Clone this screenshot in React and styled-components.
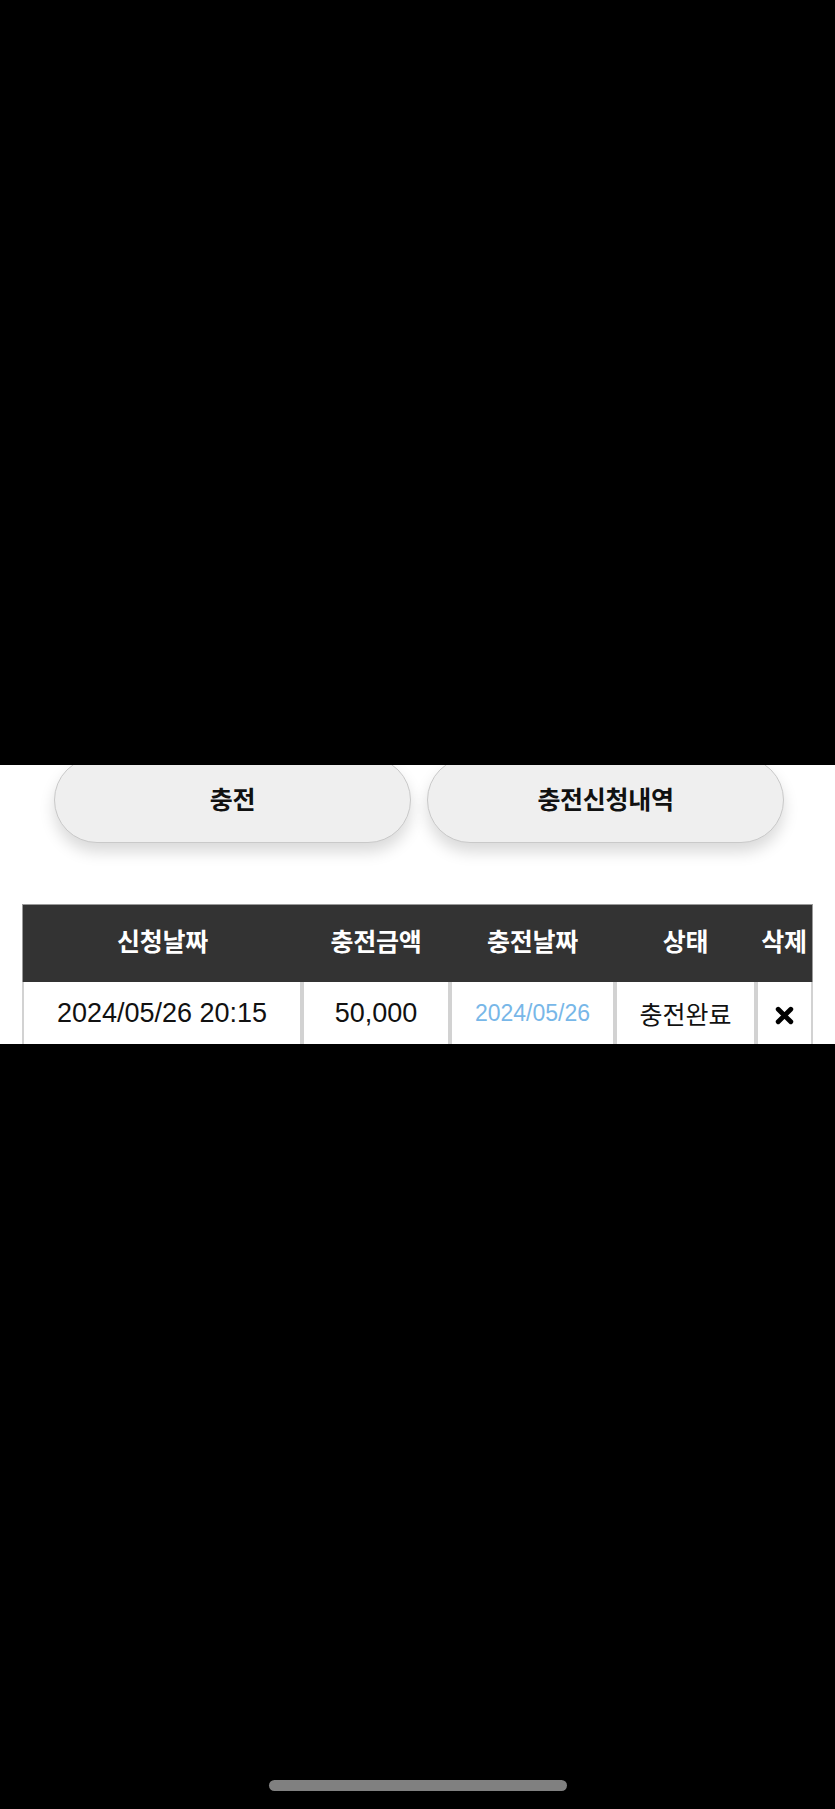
import React from "react";
import styled, { createGlobalStyle } from "styled-components";

const GlobalStyle = createGlobalStyle`
  html, body {
    margin: 0;
    padding: 0;
    background: #000;
  }
  body {
    font-family: "Liberation Sans", "Noto Sans CJK KR", sans-serif;
  }
`;

const Page = styled.div`
  width: 835px;
  height: 1809px;
  background: #000;
  display: flex;
  flex-direction: column;
  overflow: hidden;
`;

const Shade = styled.div`
  height: ${(p) => p.$h}px;
  flex-shrink: 0;
`;

const Panel = styled.section`
  height: 279px;
  background: #fff;
  overflow: hidden;
  flex-shrink: 0;
`;

const ButtonRow = styled.div`
  display: grid;
  grid-template-columns: 357px 357px;
  gap: 16px;
  padding-left: 54px;
  margin-top: -8px;
`;

const PillButton = styled.button`
  height: 86px;
  border-radius: 43px;
  border: 1.5px solid #c9c9c9;
  background: #efefef;
  box-shadow: 0 9px 15px rgba(0, 0, 0, 0.15);
  font-family: "Liberation Sans", "Noto Sans CJK KR", sans-serif;
  font-weight: 700;
  font-size: 25px;
  letter-spacing: -0.3px;
  color: #111;
  padding: 0 0 5px;
`;

const Table = styled.table`
  margin: 61px 0 0 22px;
  width: 791px;
  border-collapse: separate;
  border-spacing: 0;
  table-layout: fixed;
`;

const HeadCell = styled.th`
  height: 69px;
  padding: 0 0 8px;
  background: #333;
  border-top: 1px solid #9a9a9a;
  border-left: ${(p) => (p.$first ? "1px solid #9a9a9a" : "none")};
  border-right: ${(p) => (p.$last ? "1px solid #9a9a9a" : "none")};
  color: #fff;
  font-weight: 700;
  font-size: 25px;
  letter-spacing: -0.3px;
  text-align: center;
  vertical-align: middle;
`;

const Cell = styled.td`
  height: 62px;
  padding: 0;
  border: 2px solid #d2d2d2;
  border-top: none;
  background: #fff;
  text-align: center;
  vertical-align: middle;
  font-size: ${(p) => p.$size || 27}px;
  color: ${(p) => p.$color || "#111"};
  white-space: nowrap;
`;

const Bottom = styled.div`
  flex: 1;
  display: flex;
  justify-content: center;
  align-items: flex-end;
  padding-bottom: 18px;
`;

const HomeBar = styled.div`
  width: 298px;
  height: 11px;
  border-radius: 6px;
  background: #808080;
`;

const CrossIcon = () => (
  <svg width="21" height="21" viewBox="0 0 20 20" style={{ display: "block", margin: "4px auto 0" }}>
    <path d="M4 4 L16 16 M16 4 L4 16" stroke="#000" strokeWidth="4.6" strokeLinecap="round" />
  </svg>
);

const columns = [
  { label: "신청날짜", width: 280 },
  { label: "충전금액", width: 148 },
  { label: "충전날짜", width: 165 },
  { label: "상태", width: 141 },
  { label: "삭제", width: 57 },
];

export default function App() {
  return (
    <>
      <GlobalStyle />
      <Page>
        <Shade $h={765} />
        <Panel>
          <ButtonRow>
            <PillButton>충전</PillButton>
            <PillButton>충전신청내역</PillButton>
          </ButtonRow>
          <Table>
            <colgroup>
              {columns.map((c) => (
                <col key={c.label} style={{ width: c.width }} />
              ))}
            </colgroup>
            <thead>
              <tr>
                {columns.map((c, i) => (
                  <HeadCell key={c.label} $first={i === 0} $last={i === columns.length - 1}>
                    {c.label}
                  </HeadCell>
                ))}
              </tr>
            </thead>
            <tbody>
              <tr>
                <Cell>2024/05/26 20:15</Cell>
                <Cell>50,000</Cell>
                <Cell $size={23} $color="#78b7e8">2024/05/26</Cell>
                <Cell $size={25}>충전완료</Cell>
                <Cell>
                  <CrossIcon />
                </Cell>
              </tr>
            </tbody>
          </Table>
        </Panel>
        <Bottom>
          <HomeBar />
        </Bottom>
      </Page>
    </>
  );
}
